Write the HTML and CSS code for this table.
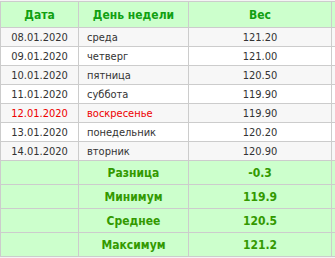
FILE: index.html
```html
<!DOCTYPE html>
<html lang="ru">
<head>
<meta charset="utf-8">
<title>Вес</title>
<link rel="stylesheet" href="styles.css">
</head>
<body>
<div class="wrap">
  <div class="grid">
    <div class="c head">Дата</div>
    <div class="c head">День недели</div>
    <div class="c head">Вес</div>
    <div class="c head"></div>

    <div class="c odd date">08.01.2020</div>
    <div class="c odd day">среда</div>
    <div class="c odd num">121.20</div>
    <div class="c odd"></div>

    <div class="c even date">09.01.2020</div>
    <div class="c even day">четверг</div>
    <div class="c even num">121.00</div>
    <div class="c even"></div>

    <div class="c odd date">10.01.2020</div>
    <div class="c odd day">пятница</div>
    <div class="c odd num">120.50</div>
    <div class="c odd"></div>

    <div class="c even date">11.01.2020</div>
    <div class="c even day">суббота</div>
    <div class="c even num">119.90</div>
    <div class="c even"></div>

    <div class="c odd date red">12.01.2020</div>
    <div class="c odd day red">воскресенье</div>
    <div class="c odd num">119.90</div>
    <div class="c odd"></div>

    <div class="c even date">13.01.2020</div>
    <div class="c even day">понедельник</div>
    <div class="c even num">120.20</div>
    <div class="c even"></div>

    <div class="c odd date">14.01.2020</div>
    <div class="c odd day">вторник</div>
    <div class="c odd num">120.90</div>
    <div class="c odd"></div>

    <div class="c sum"></div>
    <div class="c sum">Разница</div>
    <div class="c sum">-0.3</div>
    <div class="c sum"></div>

    <div class="c sum"></div>
    <div class="c sum">Минимум</div>
    <div class="c sum">119.9</div>
    <div class="c sum"></div>

    <div class="c sum"></div>
    <div class="c sum">Среднее</div>
    <div class="c sum">120.5</div>
    <div class="c sum"></div>

    <div class="c sum"></div>
    <div class="c sum">Максимум</div>
    <div class="c sum">121.2</div>
    <div class="c sum"></div>
  </div>
</div>
</body>
</html>
```
FILE: styles.css
```css
html, body {
  margin: 0;
  padding: 0;
  background: #f4f4f4;
  overflow: hidden;
}
.wrap {
  width: 335px;
  height: 258px;
  overflow: hidden;
  padding-top: 1px;
  box-sizing: border-box;
}
.grid {
  display: grid;
  grid-template-columns: 78px 110px 143px 40px;
  grid-template-rows: 26px repeat(7, 19px) repeat(4, 24px);
  width: 372px;
  border-left: 1px solid #cccccc;
  border-top: 1px solid #cccccc;
  font-family: "DejaVu Sans Condensed", "DejaVu Sans", sans-serif;
  font-stretch: condensed;
  font-size: 11px;
  color: #333333;
}
.c {
  box-sizing: border-box;
  border-right: 1px solid #cccccc;
  border-bottom: 1px solid #cccccc;
  display: flex;
  align-items: center;
  justify-content: center;
  white-space: nowrap;
}
.head {
  background: #ccffcc;
  color: #11a011;
  font-weight: bold;
  font-size: 12px;
}
.odd { background: #f7f7f7; }
.even { background: #ffffff; }
.day {
  justify-content: flex-start;
  padding-left: 8px;
}
.red { color: #ee0000; }
.sum {
  background: #ccffcc;
  color: #339900;
  font-weight: bold;
  font-size: 12px;
}
```
